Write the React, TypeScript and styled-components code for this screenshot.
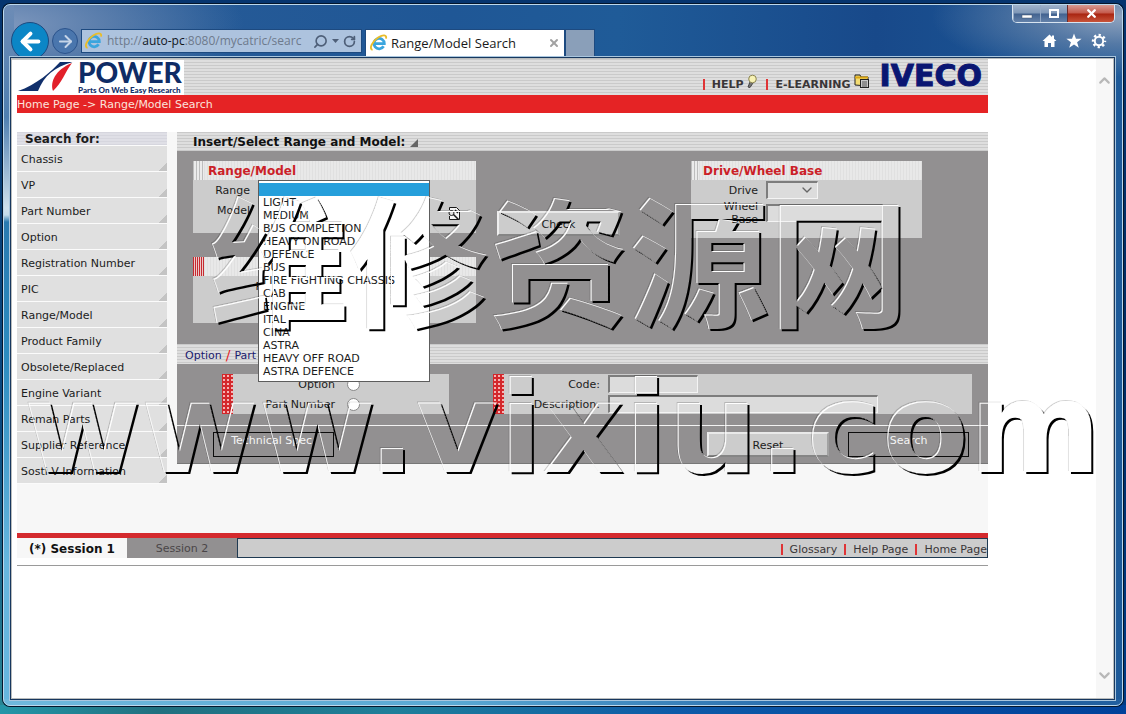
import React from 'react';
import styled, { createGlobalStyle, css } from 'styled-components';
import { ChevronDown, ChevronUp, X, RotateCw, Search, ArrowLeft, ArrowRight } from 'lucide-react';

const ui = '"DejaVu Sans", Verdana, sans-serif';
const chrome = '"Open Sans", "Segoe UI", sans-serif';

const red = '#e52325';
const grey = '#929091';
const panel = '#cccccc';

const lines = 'repeating-linear-gradient(to bottom, #cacaca 0 1px, #dedede 1px 3px)';
const bars = 'repeating-linear-gradient(to right, #e8e8e8 0 2px, #e0e0e0 2px 3px)';

const Global = createGlobalStyle`
  *, *::before, *::after { box-sizing: border-box; }
  body { margin: 0; background: #0a3c7c; font: 11px/13px ${ui}; color: #1c1c1c; }
  button, input, select { font: inherit; color: inherit; margin: 0; }
  a { color: inherit; text-decoration: none; }
`;

const Desktop = styled.div`
  min-height: 100vh;
  display: flex;
  padding: 4px 3px 8px;
  background:
    linear-gradient(to right, #2496a8, #21707f 14%, #1f7f9a 35%, #0d5aa8 60%, #00419a) bottom / 100% 9px no-repeat,
    linear-gradient(to bottom, #06356f, #0a4a80 60%, #2a8794) left / 50% 100% no-repeat,
    linear-gradient(to bottom, #06356f, #002a60 50%, #003c86);
`;

const Window = styled.div`
  position: relative;
  flex: 1;
  min-width: 0;
  display: flex;
  flex-direction: column;
  padding: 0 7px 5px 6px;
  border: 1px solid #bcd8ec;
  border-radius: 7px;
  box-shadow: 0 0 0 1px #04162c;
  background:
    linear-gradient(to right, #6fb9dd, #5aa9d4 40%, #2a6eae 70%, #215f9f) bottom / 100% 6px no-repeat,
    linear-gradient(to bottom, #6d8cb6 0, #4f7fb0 16%, #cfe0ec 29%, #c4dbea 30%, #2a7ab0 31%, #2c8cc0 50%, #66b6de 80%) left / 10px 100% no-repeat,
    radial-gradient(ellipse 240px 80px at 0 20px, #7d97bd, #6f8cb5aa 45%, transparent),
    radial-gradient(ellipse 190px 60px at 100% 12px, #8fa3be, #7089acaa 45%, transparent),
    linear-gradient(to right, #2a5c97, #1f5796 40%, #1f5b98 55%, #18498a 78%, #1d5a99);
`;

const Toolbar = styled.div`
  display: flex;
  height: 52px;
  overflow: hidden;
  font: 13px/20px ${chrome};
`;

const NavButton = styled.button<{ $main?: boolean }>`
  display: grid;
  place-items: center;
  flex: none;
  padding: 0;
  border-radius: 50%;
  ${({ $main }) =>
    $main
      ? css`width: 38px; height: 38px; margin: 17px 0 0 1px; background: #0b86c6; color: #fff; border: 1px solid #1c4a80;`
      : css`width: 26px; height: 26px; margin: 23px 0 0 3px; background: #4a76ad; color: #c6d5e8; border: 1px solid #2b538c;`}
`;

const Address = styled.div`
  display: flex;
  align-items: center;
  flex: none;
  gap: 4px;
  width: 281px;
  height: 24px;
  margin: 24px 0 0 3px;
  padding: 0 5px 0 3px;
  background: #adc3de;
  border: 1px solid #1d4a80;
  color: #4e5f78;
`;

const Url = styled.span`
  flex: 1;
  white-space: nowrap;
  font-size: 12px;
  color: #6d7a8c;
  b { font-weight: 400; color: #10151c; }
`;

const Tab = styled.div`
  display: flex;
  align-items: center;
  gap: 3px;
  width: 200px;
  height: 28px;
  margin: 24px 0 0 3px;
  padding: 0 4px;
  background: #fff;
  border: 1px solid #1d4a80;
  color: #1a1a1a;
  span { flex: 1; }
`;

const PlainButton = styled.button`
  display: flex;
  padding: 0;
  border: 0;
  background: none;
`;

const NewTab = styled.button`
  width: 30px;
  height: 28px;
  margin-top: 24px;
  border: 1px solid #1d4a80;
  background: #8a9fb9;
`;

const WindowSide = styled.div`
  display: flex;
  flex-direction: column;
  align-items: flex-end;
  margin-left: auto;
`;

const Caption = styled.div`
  display: flex;
  height: 18px;
  border: 1px solid #d8e4f0;
  border-top: 0;
  border-radius: 0 0 5px 5px;
  overflow: hidden;
`;

const CaptionButton = styled.button<{ $close?: boolean }>`
  display: grid;
  place-items: center;
  width: ${p => (p.$close ? 47 : 27)}px;
  padding: 0;
  border: 0;
  border-left: 1px solid ${p => (p.$close ? '#6b2a2a' : '#93a9c5')};
  background: ${p =>
    p.$close
      ? 'linear-gradient(#d79a92, #c4594a 48%, #a82410 52%, #c8543a)'
      : 'linear-gradient(#9fb2cb, #7e97b7 48%, #42628f 52%, #6482aa)'};
`;

const Tools = styled.div`
  display: flex;
  gap: 9px;
  padding: 10px 8px 0 0;
`;

const Client = styled.div`
  flex: 1;
  display: flex;
  min-height: 0;
  padding: 1px;
  border: 1px solid #17375e;
  box-shadow: 0 0 0 1px #a9c6de;
  background: #b9bcbc;
`;

const Page = styled.main`
  flex: 1;
  min-width: 0;
  padding-right: 108px;
  background: #fff;
`;

const ScrollBar = styled.div`
  display: flex;
  flex-direction: column;
  justify-content: space-between;
  align-items: center;
  width: 17px;
  padding: 13px 0 14px;
  background: #f7f7f7;
  color: #b8b8b8;
`;

const Header = styled.header`
  display: flex;
  align-items: flex-start;
  height: 36px;
  padding-right: 6px;
  background: ${lines};
`;

const Brand = styled.a`
  display: flex;
  gap: 3px;
  width: 172px;
  height: 35px;
  margin-top: 1px;
  padding-left: 6px;
  background: #fff;
  color: #0f2c66;
`;

const BrandName = styled.span`
  display: flex;
  flex-direction: column;
  font: 900 28px/24px Lato, sans-serif;
  small { font: 900 8px/12px Lato, sans-serif; white-space: nowrap; }
`;

const HeaderLinks = styled.nav`
  display: flex;
  align-items: center;
  margin-left: auto;
  padding-top: 19px;
`;

const BarLink = styled.a<{ $bold?: boolean }>`
  display: flex;
  align-items: center;
  white-space: nowrap;
  font-weight: ${p => (p.$bold ? 700 : 400)};
  color: #3a3638;
  &::before {
    content: '';
    width: 2px;
    height: 11px;
    margin-right: 7px;
    background: #df3436;
  }
  svg { margin: -7px 9px 0 3px; }
`;

const Iveco = styled.span`
  padding-top: 3px;
  font: 700 30px/28px ${ui};
  color: #0a1672;
  -webkit-text-stroke: 1px #0a1672;
`;

const Crumbs = styled.div`
  height: 18px;
  margin-left: 5px;
  background: ${red};
  color: #fbe3dc;
  line-height: 20px;
`;

const Body = styled.div`
  display: flex;
  align-items: flex-start;
  gap: 10px;
  min-height: 401px;
  margin: 19px 0 0 5px;
  background: #f7f7f7;
`;

const Sidebar = styled.nav`
  width: 150px;
  h2 {
    margin: 0;
    height: 14px;
    padding-left: 8px;
    border-bottom: 1px solid #fbfbfb;
    background: repeating-linear-gradient(to bottom, #d6d6de 0 1px, #dfdfe6 1px 3px);
    font: 700 12px/14px ${ui};
  }
`;

const SideLink = styled.a`
  display: block;
  height: 26px;
  padding-left: 4px;
  border-bottom: 1px solid #fbfbfb;
  background: linear-gradient(135deg, transparent 50%, #c4c4c4 50%) right bottom / 8px 8px no-repeat, #e0e0e0;
  line-height: 28px;
`;

const Main = styled.section`
  flex: 1;
  min-width: 0;
`;

const SectionTitle = styled.h1<{ $link?: boolean }>`
  display: flex;
  align-items: center;
  gap: 5px;
  margin: 0;
  height: ${p => (p.$link ? 20 : 19)}px;
  padding: 2px 0 0 ${p => (p.$link ? 8 : 16)}px;
  background: ${lines};
  font: ${p => (p.$link ? '400 11px' : '700 12px')}/13px ${ui};
  color: ${p => (p.$link ? '#1a1a6e' : '#111')};
  a { display: flex; gap: 4px; }
  i { font: 400 14px/13px ${ui}; color: ${red}; }
`;

const RangeArea = styled.div`
  display: flex;
  align-items: flex-start;
  height: 193px;
  padding: 10px 66px 0 16px;
  background: ${grey};
`;

const Stack = styled.div`
  flex: 284 1 0;
  display: grid;
  gap: 24px;
`;

const Panel = styled.fieldset<{ $height: number; $label: number }>`
  display: block;
  min-width: 0;
  margin: 0;
  padding: 0;
  border: 0;
  height: ${p => p.$height}px;
  background: ${panel};
  --label: ${p => p.$label}px;
`;

const DrivePanel = styled(Panel)`
  flex: 232 1 0;
  margin-left: 71px;
`;

const PanelTitle = styled.div<{ $alert?: boolean; $tight?: boolean }>`
  display: flex;
  gap: 4px;
  height: 19px;
  background: ${bars};
  color: #cb1f28;
  font-weight: 700;
  font-size: 12px;
  line-height: 20px;
  &::before {
    content: '';
    width: ${p => (p.$tight ? 8 : 11)}px;
    background: ${p =>
      p.$alert
        ? 'repeating-linear-gradient(to right, #c62a30 0 1px, #eccaca 1px 2px)'
        : 'repeating-linear-gradient(to right, #bdbdbd 0 1px, #ebebeb 1px 3px)'};
  }
`;

const Row = styled.div<{ $tall?: boolean }>`
  position: relative;
  display: grid;
  grid-template-columns: var(--label) 1fr;
  column-gap: 8px;
  align-items: center;
  min-height: ${p => (p.$tall ? 26 : 20)}px;
  label { padding-left: ${p => (p.$tall ? 24 : 0)}px; text-align: right; }
`;

const IconSlot = styled(PlainButton)`
  justify-self: end;
  margin: 6px 15px 0 0;
`;

const RangeList = styled.select`
  position: absolute;
  top: 0;
  left: 65px;
  z-index: 2;
  width: 172px;
  height: 202px;
  padding: 2px 0;
  border: 1px solid #5d5d5d;
  border-radius: 0;
  outline: 0;
  background: #fff;
  overflow: hidden;
  scrollbar-width: none;
  option {
    display: block;
    height: 13px;
    min-height: 13px;
    padding: 0 4px;
    line-height: 15px;
    color: #1c1c1c;
  }
  option:checked { background: #269fdb linear-gradient(#269fdb, #269fdb); }
`;

const SelectWrap = styled.span`
  position: relative;
  display: flex;
  width: 52px;
  svg { position: absolute; right: 3px; top: 1px; pointer-events: none; }
`;

const inset = css`
  border: 1px solid;
  border-width: 2px 1px 1px 2px;
  border-color: #7d7d7d #f4f4f4 #f4f4f4 #7d7d7d;
  border-radius: 0;
  background: #dcdcdc;
`;

const DriveSelect = styled.select`
  ${inset}
  appearance: none;
  width: 52px;
  height: 18px;
`;

const TextInput = styled.input<{ $width: number }>`
  ${inset}
  width: ${p => p.$width}px;
  height: 18px;
`;

const RaisedButton = styled.button<{ $gap: number }>`
  flex: 120 1 0;
  height: 25px;
  margin-left: ${p => p.$gap}px;
  padding: 2px 0 0;
  border: 1px solid;
  border-width: 2px;
  border-color: #e9e9e9 #a2a2a2 #858585 #eeeeee;
  background: ${panel};
`;

const CheckButton = styled(RaisedButton)`
  margin-top: 50px;
`;

const OptionArea = styled.div`
  display: flex;
  height: 61px;
  padding: 10px 16px 0 45px;
  background: ${grey};
`;

const OptionBox = styled.fieldset<{ $grow: number; $label: number }>`
  flex: ${p => p.$grow} 1 0;
  min-width: 0;
  height: 40px;
  margin: 0;
  padding: 0 0 0 11px;
  border: 0;
  background:
    linear-gradient(to right, transparent 11px, ${panel} 11px),
    radial-gradient(circle at 2px 2px, #f5b5b5 0 1px, #d4282c 1px) 0 0 / 4px 4px;
  --label: ${p => p.$label}px;
  & + & { margin-left: 44px; }
`;

const Radio = styled.input`
  appearance: none;
  width: 13px;
  height: 13px;
  justify-self: start;
  margin-left: 4px;
  border: 1px solid #888;
  border-radius: 50%;
  background: #fff;
`;

const Actions = styled.div`
  display: flex;
  align-items: flex-start;
  height: 40px;
  padding: 6px 19px 0 36px;
  border-top: 1px solid #f2f2f2;
  border-bottom: 1px solid #f7f7f7;
  background: linear-gradient(#777, #777) bottom / 100% 1px no-repeat, ${grey};
`;

const FlatButton = styled.button<{ $gap?: number }>`
  flex: 120 1 0;
  height: 25px;
  margin-left: ${p => p.$gap ?? 0}px;
  padding: 0 0 8px;
  border: 1px solid #0c0c0c;
  background: transparent;
  color: #f4f4f4;
`;

const Spring = styled.span`
  flex: 377 1 0;
`;

const Footer = styled.footer`
  display: flex;
  height: 33px;
  margin-left: 5px;
  padding-bottom: 7px;
  border-top: 5px solid #d42a2e;
  border-bottom: 1px solid #9a9a9a;
`;

const Session = styled.a<{ $active?: boolean }>`
  width: 110px;
  background: ${p => (p.$active ? '#f7f7f7' : grey)};
  color: ${p => (p.$active ? '#111' : '#4a4648')};
  font: ${p => (p.$active ? '700 12px' : '400 11px')}/22px ${ui};
  text-align: center;
`;

const FooterLinks = styled.nav`
  flex: 1;
  display: flex;
  justify-content: flex-end;
  align-items: center;
  gap: 7px;
  padding-top: 2px;
  border: 1px solid #1f3a52;
  background: ${panel};
`;

const Watermark = styled.svg`
  position: absolute;
  top: 0;
  left: 0;
  z-index: 5;
  width: 1114px;
  height: 500px;
  overflow: visible;
  pointer-events: none;
`;

const IeIcon = () => (
  <svg width="18" height="18" viewBox="0 0 18 18" fill="none" style={{ flex: 'none' }}>
    <path d="M13.6 12.2A5.2 5.2 0 1 1 14.3 9.6H5.2" stroke="#3aa5de" strokeWidth="2.8" />
    <path d="M2.6 15.8C-1.5 15 2.4 7 8.5 3.2C12.8.6 17 .4 16 4.6" stroke="#e9bd2b" strokeWidth="1.9" />
  </svg>
);

const items = [
  'Chassis', 'VP', 'Part Number', 'Option', 'Registration Number', 'PIC', 'Range/Model',
  'Product Family', 'Obsolete/Replaced', 'Engine Variant', 'Reman Parts', 'Supplier Reference',
  'Sosti V Information',
];

const ranges = [
  '', 'LIGHT', 'MEDIUM', 'BUS COMPLETION', 'HEAVY ON ROAD', 'DEFENCE', 'BUS',
  'FIRE FIGHTING CHASSIS', 'CAB', 'ENGINE', 'ITAL', 'CINA', 'ASTRA', 'HEAVY OFF ROAD', 'ASTRA DEFENCE',
];

const BrowserBar = () => (
  <Toolbar>
    <NavButton $main aria-label="Back"><ArrowLeft size={27} strokeWidth={3.5} /></NavButton>
    <NavButton aria-label="Forward"><ArrowRight size={19} strokeWidth={2.5} /></NavButton>
    <Address>
      <IeIcon />
      <Url>http://<b>auto-pc</b>:8080/mycatric/searc</Url>
      <Search size={15} strokeWidth={2.6} style={{ transform: 'scaleX(-1)' }} />
      <svg width="7" height="4"><path d="M0 0h7L3.5 4z" fill="currentColor" /></svg>
      <RotateCw size={13} strokeWidth={3.2} />
    </Address>
    <Tab>
      <IeIcon />
      <span>Range/Model Search</span>
      <PlainButton aria-label="Close tab"><X size={12} strokeWidth={4} color="#a2a2a2" /></PlainButton>
    </Tab>
    <NewTab aria-label="New tab" />
    <WindowSide>
      <Caption>
        <CaptionButton aria-label="Minimize">
          <svg width="12" height="12"><rect x="1" y="7" width="10" height="3" fill="#fff" stroke="#46566e" strokeWidth=".5" /></svg>
        </CaptionButton>
        <CaptionButton aria-label="Maximize">
          <svg width="12" height="12" fill="none"><rect x="2" y="2" width="8" height="7" stroke="#fff" strokeWidth="2" /></svg>
        </CaptionButton>
        <CaptionButton $close aria-label="Close"><X size={13} strokeWidth={4.5} color="#fff" /></CaptionButton>
      </Caption>
      <Tools>
        <PlainButton aria-label="Home">
          <svg width="15" height="16" viewBox="0 0 15 16" fill="#fff"><path d="M7.500 1.500L.5 8h2v6h3.500v-4h3v4h3.500V8h2L12 5.700V2.500h-2v1.400z" /></svg>
        </PlainButton>
        <PlainButton aria-label="Favorites">
          <svg width="16" height="16" viewBox="0 0 16 16" fill="#fff"><path d="M8 .5l2 5.300h5.600l-4.500 3.500 1.700 5.500L8 11.500l-4.800 3.300 1.700-5.500L.4 5.800H6z" /></svg>
        </PlainButton>
        <PlainButton aria-label="Settings">
          <svg width="16" height="16" viewBox="0 0 16 16" fill="none" stroke="#fff">
            <circle cx="8" cy="8" r="4.200" strokeWidth="2" />
            <circle cx="8" cy="8" r="6" strokeWidth="2.400" strokeDasharray="2.300 2.412" strokeDashoffset="1.150" />
          </svg>
        </PlainButton>
      </Tools>
    </WindowSide>
  </Toolbar>
);

export default function App() {
  return (
    <Desktop>
      <Global />
      <Window>
        <BrowserBar />
        <Client>
          <Page>
            <Header>
              <Brand href="#">
                <svg width="57" height="32" viewBox="0 0 57 32">
                  <path d="M0 31C18 25 34 11 42 2h13L50 4.500C38 7 30 17 23 31z" fill="#102f6b" />
                  <path d="M20 31C26 16 36 7 55 2L60 3 34 31z" fill="#fff" />
                  <path d="M35 31c-3-9 2-21 19-28-7 9-10 20-19 28z" fill="#e2202a" />
                </svg>
                <BrandName>POWER<small>Parts On Web Easy Research</small></BrandName>
              </Brand>
              <HeaderLinks>
                <BarLink $bold href="#">
                  HELP
                  <svg width="11" height="15" viewBox="0 0 11 15">
                    <path d="M4 8L2 13l2 .5L7 9" fill="#777" stroke="#444" />
                    <circle cx="6.500" cy="5" r="3.800" fill="#f7f2b4" stroke="#8b8450" />
                  </svg>
                </BarLink>
                <BarLink $bold href="#">
                  E-LEARNING
                  <svg width="17" height="15" viewBox="2 0 17 15">
                    <path d="M3 11V1h5l1 2h7v9z" fill="#f3dc72" stroke="#222" />
                    <path d="M3 3.500h13" stroke="#d9a514" strokeWidth="2" />
                    <rect x="8.500" y="5.500" width="8" height="8" fill="#c8c8c8" stroke="#222" />
                    <path d="M10 8h5M10 10h5M10 12h5" stroke="#555" />
                  </svg>
                </BarLink>
              </HeaderLinks>
              <Iveco>IVECO</Iveco>
            </Header>
            <Crumbs><a href="#">Home Page</a> -&gt; <a href="#">Range/Model Search</a></Crumbs>

            <Body>
              <Sidebar>
                <h2>Search for:</h2>
                {items.map(t => <SideLink key={t} href="#">{t}</SideLink>)}
              </Sidebar>

              <Main>
                <SectionTitle>
                  Insert/Select Range and Model:
                  <svg width="8" height="8"><path d="M8 0v8H0z" fill="#666" /></svg>
                </SectionTitle>
                <RangeArea>
                  <Stack>
                    <Panel $height={72} $label={57}>
                      <PanelTitle>Range/Model</PanelTitle>
                      <Row>
                        <label htmlFor="range">Range</label>
                        <RangeList id="range" size={15} defaultValue="">
                          {ranges.map(r => <option key={r} value={r}>{r}</option>)}
                        </RangeList>
                      </Row>
                      <Row>
                        <label>Model</label>
                        <IconSlot aria-label="Model list">
                          <svg width="14" height="15" viewBox="0 0 14 15" fill="none" stroke="#1a1a1a">
                            <path d="M2.500 4V1.500h7l3 3v9h-10V10" fill="#f4f4f4" />
                            <circle cx="4.500" cy="7" r="2.500" fill="#ddd" />
                            <path d="M6.500 8.500l5 5M8 4l3 3" strokeWidth="1.500" />
                          </svg>
                        </IconSlot>
                      </Row>
                    </Panel>
                    <Panel $height={66} $label={80}>
                      <PanelTitle $alert />
                      <Row><label>PIC</label></Row>
                    </Panel>
                  </Stack>
                  <CheckButton $gap={21}>Check</CheckButton>
                  <DrivePanel $height={77} $label={67}>
                    <PanelTitle $tight>Drive/Wheel Base</PanelTitle>
                    <Row>
                      <label htmlFor="drive">Drive</label>
                      <SelectWrap>
                        <DriveSelect id="drive" />
                        <ChevronDown size={16} color="#666" />
                      </SelectWrap>
                    </Row>
                    <Row $tall>
                      <label htmlFor="wheel">Wheel Base</label>
                      <TextInput id="wheel" $width={117} />
                    </Row>
                  </DrivePanel>
                </RangeArea>

                <SectionTitle $link>
                  <a href="#">Option <i>/</i> Part Number</a>
                </SectionTitle>
                <OptionArea>
                  <OptionBox $grow={216} $label={102}>
                    <Row><label htmlFor="opt">Option</label><Radio type="radio" name="kind" id="opt" /></Row>
                    <Row><label htmlFor="part">Part Number</label><Radio type="radio" name="kind" id="part" /></Row>
                  </OptionBox>
                  <OptionBox $grow={468} $label={96}>
                    <Row><label htmlFor="code">Code:</label><TextInput id="code" $width={90} /></Row>
                    <Row><label htmlFor="desc">Description:</label><TextInput id="desc" $width={270} /></Row>
                  </OptionBox>
                </OptionArea>
                <Actions>
                  <FlatButton>Technical Spec.</FlatButton>
                  <Spring />
                  <RaisedButton $gap={0}>Reset</RaisedButton>
                  <FlatButton $gap={19}>Search</FlatButton>
                </Actions>
              </Main>
            </Body>

            <Footer>
              <Session $active href="#">(*) Session 1</Session>
              <Session href="#">Session 2</Session>
              <FooterLinks>
                <BarLink href="#">Glossary</BarLink>
                <BarLink href="#">Help Page</BarLink>
                <BarLink href="#">Home Page</BarLink>
              </FooterLinks>
            </Footer>
          </Page>
          <ScrollBar>
            <ChevronUp size={17} strokeWidth={3} />
            <ChevronDown size={17} strokeWidth={3} />
          </ScrollBar>
        </Client>
        <Watermark aria-hidden="true">
          <defs>
            <filter id="emboss" filterUnits="userSpaceOnUse" x="0" y="150" width="1120" height="350">
              <feOffset in="SourceAlpha" dx="2" dy="2" result="low" />
              <feGaussianBlur in="low" stdDeviation="0.6" result="lowSoft" />
              <feComposite in="lowSoft" in2="SourceAlpha" operator="out" result="shadow" />
              <feOffset in="SourceAlpha" dx="1" dy="1" result="in1" />
              <feComposite in="SourceAlpha" in2="in1" operator="out" result="rim" />
              <feFlood floodColor="#fff" />
              <feComposite in2="rim" operator="in" result="light" />
              <feOffset in="SourceAlpha" dx="-1" dy="-1" result="up" />
              <feComposite in="up" in2="SourceAlpha" operator="out" result="outer" />
              <feComponentTransfer in="outer" result="faint">
                <feFuncA type="linear" slope="0.18" />
              </feComponentTransfer>
              <feMerge>
                <feMergeNode in="faint" />
                <feMergeNode in="shadow" />
                <feMergeNode in="light" />
              </feMerge>
            </filter>
          </defs>
          <g filter="url(#emboss)" fontWeight="700">
            <text x="205" y="311" fontSize="140" fontFamily='"Noto Sans CJK SC", sans-serif'>维修资源网</text>
            <text x="20" y="467" fontSize="127" fontFamily='"DejaVu Sans", Verdana, sans-serif'>www.vixiu.com</text>
          </g>
        </Watermark>
      </Window>
    </Desktop>
  );
}
